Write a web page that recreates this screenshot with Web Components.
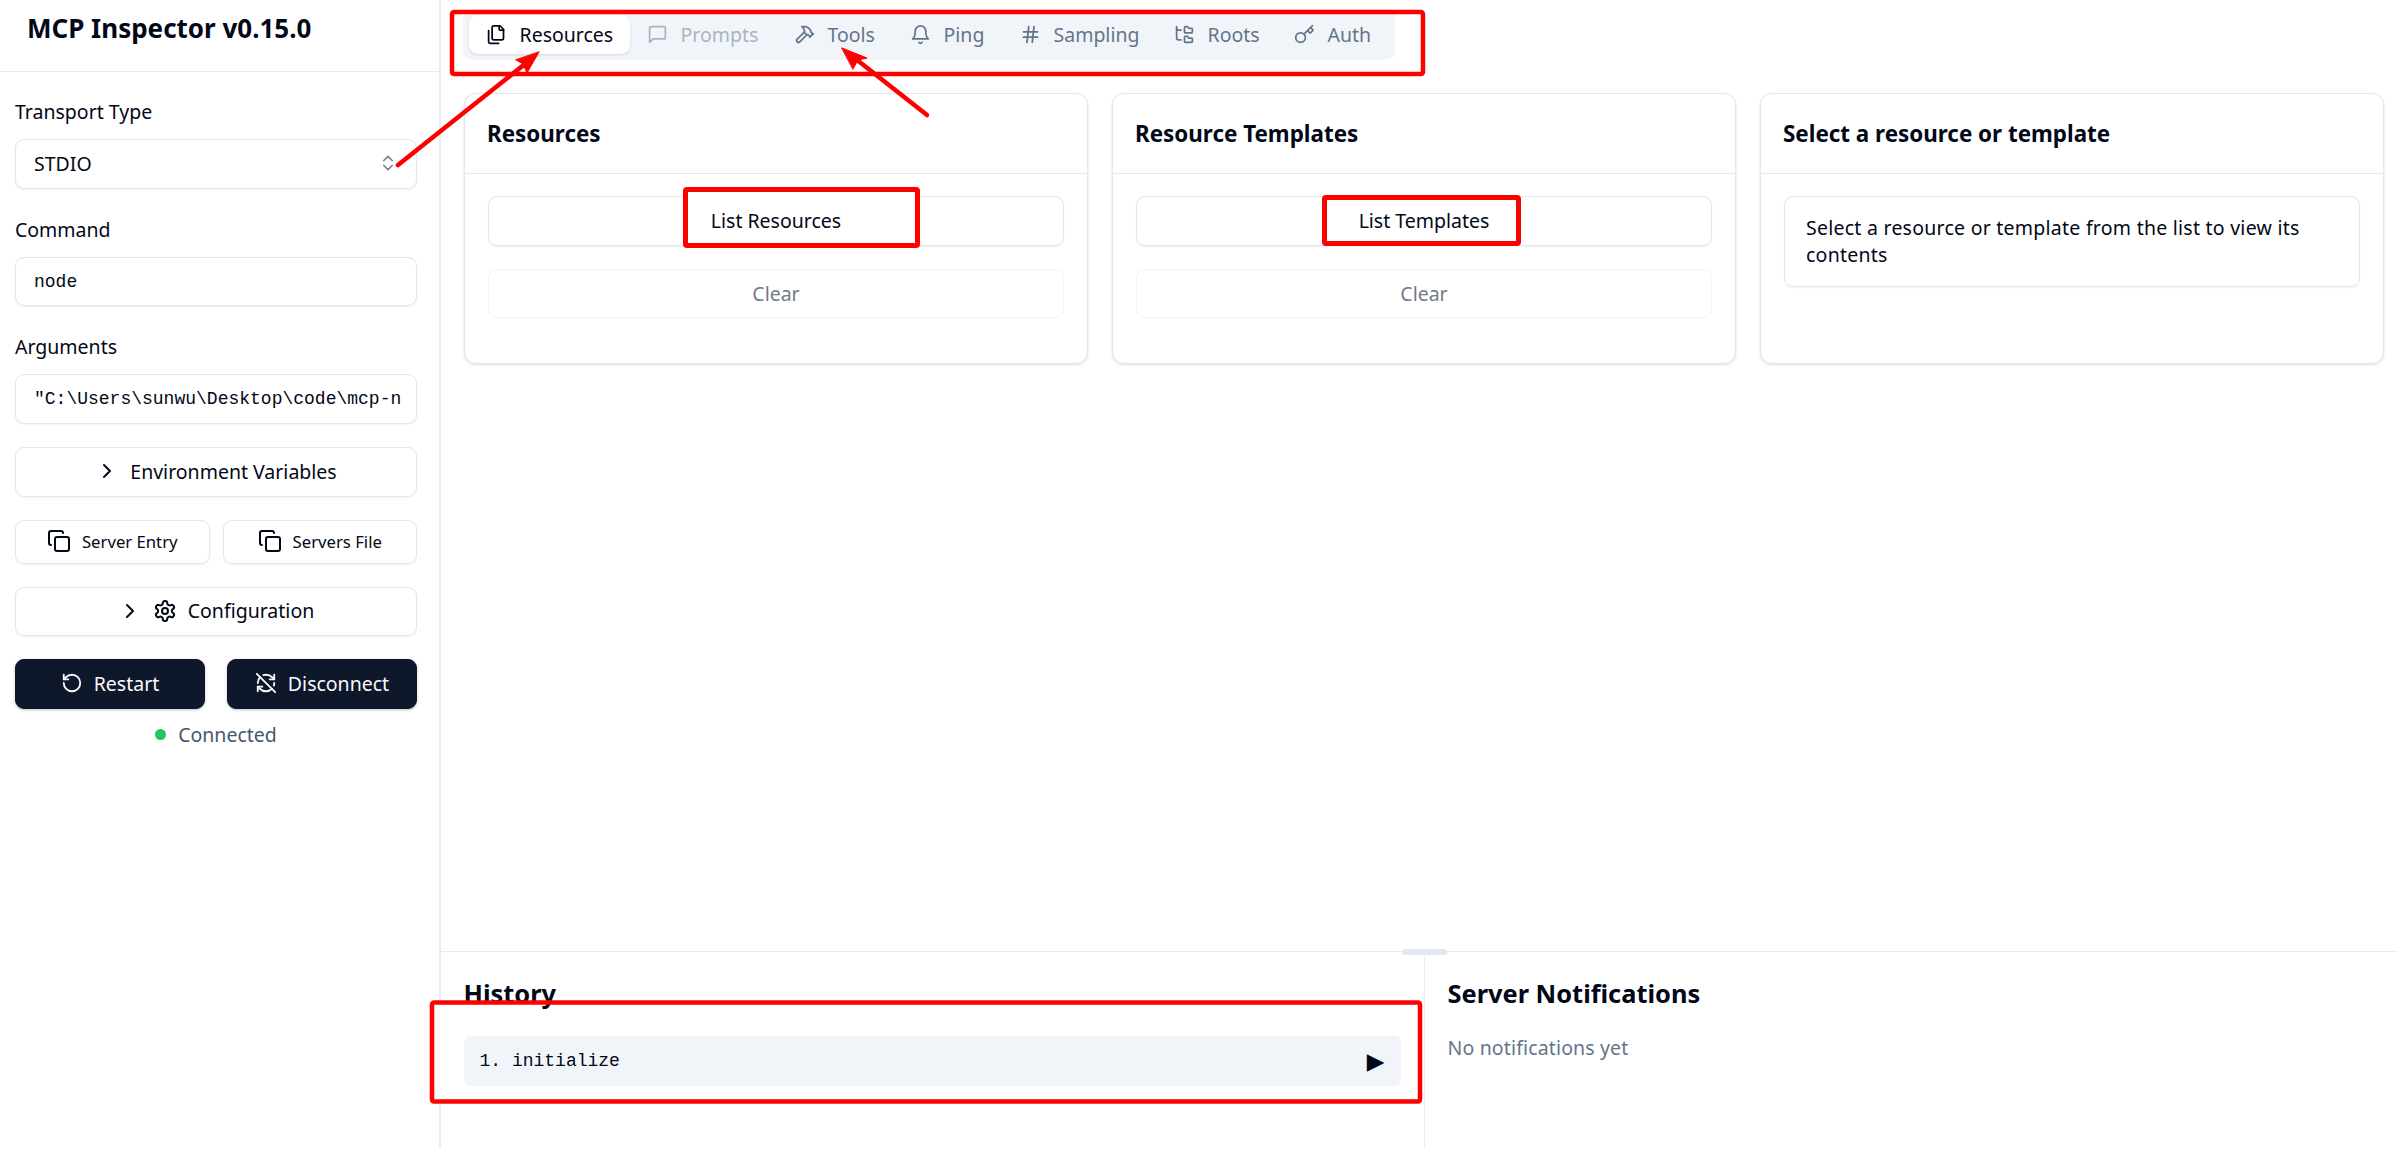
<!DOCTYPE html>
<html>
<head>
<meta charset="utf-8">
<title>MCP Inspector</title>
<style>
    html, body { margin: 0; height: 100%; background: #fff; overflow: hidden; }
    body { font-family: "Noto Sans", "Liberation Sans", sans-serif; font-size: 19.5px; color: #020817; }
</style>
</head>
<body>
<mcp-inspector></mcp-inspector>

<script>
// Stroke icons, same 24x24 grid for all of them
const ICONS = {
    files: '<path d="M20 7h-3a2 2 0 0 1-2-2V2"/><path d="M9 18a2 2 0 0 1-2-2V4a2 2 0 0 1 2-2h7l4 4v10a2 2 0 0 1-2 2Z"/><path d="M3 7.6v12.8A1.6 1.6 0 0 0 4.6 22h9.8"/>',
    message: '<path d="M21 15a2 2 0 0 1-2 2H7l-4 4V5a2 2 0 0 1 2-2h14a2 2 0 0 1 2 2z"/>',
    hammer: '<path d="m15 12-8.373 8.373a1 1 0 1 1-3-3L12 9"/><path d="m18 15 4-4"/><path d="m21.5 11.5-1.914-1.914A2 2 0 0 1 19 8.172V7l-2.26-2.26a6 6 0 0 0-4.202-1.756L9 2.96l.92.82A6.18 6.18 0 0 1 12 8.4V10l2 2h1.172a2 2 0 0 1 1.414.586L18.5 14.5"/>',
    bell: '<path d="M6 8a6 6 0 0 1 12 0c0 7 3 9 3 9H3s3-2 3-9"/><path d="M10.3 21a1.94 1.94 0 0 0 3.4 0"/>',
    hash: '<line x1="4" x2="20" y1="9" y2="9"/><line x1="4" x2="20" y1="15" y2="15"/><line x1="10" x2="8" y1="3" y2="21"/><line x1="16" x2="14" y1="3" y2="21"/>',
    tree: '<path d="M20 10a1 1 0 0 0 1-1V6a1 1 0 0 0-1-1h-2.5a1 1 0 0 1-.8-.4l-.9-1.2A1 1 0 0 0 15 3h-2a1 1 0 0 0-1 1v5a1 1 0 0 0 1 1Z"/><path d="M20 21a1 1 0 0 0 1-1v-3a1 1 0 0 0-1-1h-2.9a1 1 0 0 1-.88-.55l-.42-.85a1 1 0 0 0-.92-.6H13a1 1 0 0 0-1 1v5a1 1 0 0 0 1 1Z"/><path d="M3 5a2 2 0 0 0 2 2h3"/><path d="M3 3v13a2 2 0 0 0 2 2h3"/>',
    key: '<path d="m15.5 7.5 2.3 2.3a1 1 0 0 0 1.4 0l2.1-2.1a1 1 0 0 0 0-1.4L19 4"/><path d="m21 2-9.6 9.6"/><circle cx="7.5" cy="15.5" r="5.5"/>',
    chevron: '<path d="m9 18 6-6-6-6"/>',
    updown: '<path d="m7 15 5 5 5-5"/><path d="m7 9 5-5 5 5"/>',
    copy: '<rect width="14" height="14" x="8" y="8" rx="2" ry="2"/><path d="M4 16c-1.1 0-2-.9-2-2V4c0-1.1.9-2 2-2h10c1.1 0 2 .9 2 2"/>',
    gear: '<path d="M12.22 2h-.44a2 2 0 0 0-2 2v.18a2 2 0 0 1-1 1.73l-.43.25a2 2 0 0 1-2 0l-.15-.08a2 2 0 0 0-2.73.73l-.22.38a2 2 0 0 0 .73 2.73l.15.1a2 2 0 0 1 1 1.72v.51a2 2 0 0 1-1 1.74l-.15.09a2 2 0 0 0-.73 2.73l.22.38a2 2 0 0 0 2.73.73l.15-.08a2 2 0 0 1 2 0l.43.25a2 2 0 0 1 1 1.73V20a2 2 0 0 0 2 2h.44a2 2 0 0 0 2-2v-.18a2 2 0 0 1 1-1.73l.43-.25a2 2 0 0 1 2 0l.15.08a2 2 0 0 0 2.73-.73l.22-.39a2 2 0 0 0-.73-2.73l-.15-.08a2 2 0 0 1-1-1.74v-.5a2 2 0 0 1 1-1.74l.15-.09a2 2 0 0 0 .73-2.73l-.22-.38a2 2 0 0 0-2.73-.73l-.15.08a2 2 0 0 1-2 0l-.43-.25a2 2 0 0 1-1-1.73V4a2 2 0 0 0-2-2z"/><circle cx="12" cy="12" r="3"/>',
    restart: '<path d="M3 12a9 9 0 1 0 9-9 9.75 9.75 0 0 0-6.74 2.74L3 8"/><path d="M3 3v5h5"/>',
    unplug: '<path d="M21 8L18.74 5.74A9.75 9.75 0 0 0 12 3C11 3 10.03 3.16 9.13 3.47"/><path d="M8 16H3v5"/><path d="M3 12C3 9.51 4 7.26 5.64 5.64"/><path d="m3 16 2.26 2.26A9.75 9.75 0 0 0 12 21c2.49 0 4.74-1 6.36-2.64"/><path d="M21 12c0 1-.16 1.97-.47 2.87"/><path d="M21 3v5h-5"/><path d="M22 22 2 2"/>'
};

class UiIcon extends HTMLElement {
    connectedCallback() {
        const size = this.getAttribute('size') || 24;
        this.attachShadow({ mode: 'open' });
        this.shadowRoot.innerHTML = `
            <style>
                :host { display: inline-flex; flex: none; }
                svg { display: block; fill: none; stroke: currentColor; stroke-width: 2; stroke-linecap: round; stroke-linejoin: round; }
            </style>
            <svg width="${size}" height="${size}" viewBox="0 0 24 24">${ICONS[this.getAttribute('name')]}</svg>
        `;
    }
}
customElements.define('ui-icon', UiIcon);

class UiButton extends HTMLElement {
    constructor() {
        super();
        this.attachShadow({ mode: 'open' });
        this.shadowRoot.innerHTML = `
            <style>
                :host {
                    display: flex; align-items: center; justify-content: center; gap: 11px;
                    box-sizing: border-box; height: 50px; padding-bottom: 2px; border-radius: 9px;
                    border: 1px solid #e2e8f0; background: #fff; color: #020817;
                    box-shadow: 0 1px 2px rgba(15, 23, 42, .06);
                    white-space: nowrap; position: relative;
                }
                :host([dark]) { background: #0f172a; border-color: #0f172a; color: #f8fafc; box-shadow: 0 1px 3px rgba(15, 23, 42, .25); }
                :host([disabled]) { color: #717a8b; border-color: #f0f3f7; box-shadow: none; padding-bottom: 0; }
                :host([small]) { font-size: 16.7px; }
            </style>
            <slot></slot>
        `;
    }
}
customElements.define('ui-button', UiButton);

// Button whose label is marked by a hand drawn white-filled red frame
class MarkedButton extends HTMLElement {
    constructor() {
        super();
        this.attachShadow({ mode: 'open' });
        this.shadowRoot.innerHTML = `
            <style>
                :host { display: block; }
                .mark {
                    position: absolute; box-sizing: border-box; background: #fff;
                    border: 5px solid #f00; border-radius: 4px;
                }
                span { position: relative; }
            </style>
            <ui-button><div class="mark"></div><span><slot></slot></span></ui-button>
        `;
    }
    connectedCallback() {
        this.shadowRoot.querySelector('.mark').style.cssText = this.getAttribute('mark');
    }
}
customElements.define('marked-button', MarkedButton);

class FieldBox extends HTMLElement {
    constructor() {
        super();
        this.attachShadow({ mode: 'open' });
        this.shadowRoot.innerHTML = `
            <style>
                :host {
                    display: flex; align-items: center; justify-content: space-between;
                    box-sizing: border-box; height: 50px; padding: 0 18px 2px; overflow: hidden;
                    border: 1px solid #e2e8f0; border-radius: 9px; background: #fff;
                    box-shadow: 0 1px 2px rgba(15, 23, 42, .06); white-space: nowrap;
                }
                :host([mono]) { font-family: "Liberation Mono", monospace; font-size: 18px; padding-bottom: 0; }
            </style>
            <slot></slot>
        `;
    }
}
customElements.define('field-box', FieldBox);

class TabItem extends HTMLElement {
    connectedCallback() {
        this.attachShadow({ mode: 'open' });
        this.shadowRoot.innerHTML = `
            <style>
                :host {
                    display: flex; align-items: center; gap: 13px; box-sizing: border-box; flex: none;
                    height: 39px; padding-left: 16.5px; border-radius: 9px; color: #64748b;
                    white-space: nowrap;
                }
                :host([active]) { background: #fff; color: #020817; box-shadow: 0 1px 3px rgba(15, 23, 42, .12); }
                :host([disabled]) { opacity: .5; }
            </style>
            <ui-icon size="21" name="${this.getAttribute('icon')}"></ui-icon>
            <slot></slot>
        `;
    }
}
customElements.define('tab-item', TabItem);

class TabBar extends HTMLElement {
    constructor() {
        super();
        this.attachShadow({ mode: 'open' });
        this.shadowRoot.innerHTML = `
            <style>
                :host {
                    display: flex; align-items: flex-start; box-sizing: border-box; width: 932px; height: 51px;
                    margin: 9px 0 0 22px; padding: 6px; background: #f1f5f9; border-radius: 9px;
                }
            </style>
            <slot></slot>
        `;
    }
}
customElements.define('tab-bar', TabBar);

class ResCard extends HTMLElement {
    constructor() {
        super();
        this.attachShadow({ mode: 'open' });
        this.shadowRoot.innerHTML = `
            <style>
                :host {
                    display: block; box-sizing: border-box; height: 271px;
                    border: 1px solid #e2e8f0; border-radius: 12px; background: #fff;
                    box-shadow: 0 1px 3px rgba(15, 23, 42, .12);
                }
                header {
                    box-sizing: border-box; height: 80px; padding: 0 22px; display: flex; align-items: center;
                    border-bottom: 1px solid #e2e8f0; font-size: 22.4px; font-weight: 700;
                }
                section { display: flex; flex-direction: column; gap: 23px; padding: 22px 23px; }
            </style>
            <header></header>
            <section><slot></slot></section>
        `;
    }
    connectedCallback() {
        this.shadowRoot.querySelector('header').textContent = this.getAttribute('title');
        this.removeAttribute('title');
    }
}
customElements.define('res-card', ResCard);

class InspectorSidebar extends HTMLElement {
    constructor() {
        super();
        this.attachShadow({ mode: 'open' });
        this.shadowRoot.innerHTML = `
            <style>
                :host {
                    display: block; flex: none; box-sizing: border-box; width: 441px; height: 100%;
                    border-right: 2px solid #e7ebf2;
                }
                h1 {
                    box-sizing: border-box; height: 72px; margin: 0; padding: 8px 0 0 27px;
                    border-bottom: 1px solid #e7ebf2; font-size: 26px; line-height: 40px; font-weight: 700;
                }
                .body { display: flex; flex-direction: column; padding: 26px 22px 0 15px; }
                label { display: block; height: 28px; line-height: 28px; margin-bottom: 13px; }
                field-box + label { margin-top: 27px; }
                .row { display: flex; gap: 13px; }
                .row > * { flex: 1; }
                .actions { gap: 22px; }
                .env { margin-top: 23px; }
                .small { height: 44px; }
                .status {
                    display: flex; align-items: center; justify-content: center; gap: 12px;
                    height: 28px; margin-top: 11px; color: #475569;
                }
                .dot { width: 11px; height: 11px; border-radius: 50%; background: #22c55e; }
                .updown { opacity: .5; }
            </style>
            <h1>MCP Inspector v0.15.0</h1>
            <div class="body">
                <label>Transport Type</label>
                <field-box>STDIO<ui-icon class="updown" name="updown" size="20"></ui-icon></field-box>
                <label>Command</label>
                <field-box mono style="height:49px">node</field-box>
                <label>Arguments</label>
                <field-box mono>"C:\\Users\\sunwu\\Desktop\\code\\mcp-n</field-box>
                <ui-button class="env"><ui-icon name="chevron"></ui-icon>Environment Variables</ui-button>
                <div class="row env">
                    <ui-button class="small" small><ui-icon name="copy"></ui-icon>Server Entry</ui-button>
                    <ui-button class="small" small><ui-icon name="copy"></ui-icon>Servers File</ui-button>
                </div>
                <ui-button class="env" style="height:49px"><ui-icon name="chevron"></ui-icon><ui-icon name="gear"></ui-icon>Configuration</ui-button>
                <div class="row actions env">
                    <ui-button dark><ui-icon name="restart" size="22"></ui-icon>Restart</ui-button>
                    <ui-button dark><ui-icon name="unplug" size="22"></ui-icon>Disconnect</ui-button>
                </div>
                <div class="status"><span class="dot"></span>Connected</div>
            </div>
        `;
    }
}
customElements.define('inspector-sidebar', InspectorSidebar);

class BottomPanel extends HTMLElement {
    constructor() {
        super();
        this.attachShadow({ mode: 'open' });
        this.shadowRoot.innerHTML = `
            <style>
                :host {
                    display: grid; grid-template-columns: 984px 1fr; flex: none; box-sizing: border-box;
                    height: 198px; border-top: 1px solid #e7ebf2; position: relative;
                }
                .handle {
                    position: absolute; left: 961px; top: -3px; width: 45px; height: 6px;
                    border-radius: 3px; background: #e2e8f0;
                }
                section { padding: 24px 22.5px 0; }
                .history { border-right: 1px solid #e7ebf2; }
                h2 { margin: 0; height: 34px; line-height: 34px; font-size: 25.4px; font-weight: 700; }
                .item {
                    display: flex; align-items: center; justify-content: space-between; box-sizing: border-box;
                    width: 937px; height: 50px; margin-top: 26px; padding: 0 16px; border-radius: 6px; background: #f1f5f9;
                    font-family: "Liberation Mono", monospace; font-size: 18px;
                }
                .play { font-family: "DejaVu Sans", sans-serif; font-size: 23px; line-height: 1; }
                .empty { margin-top: 24px; line-height: 28px; color: #64748b; letter-spacing: .15px; }
            </style>
            <div class="handle"></div>
            <section class="history">
                <h2>History</h2>
                <div class="item"><span>1. initialize</span><span class="play">▶</span></div>
            </section>
            <section>
                <h2>Server Notifications</h2>
                <div class="empty">No notifications yet</div>
            </section>
        `;
    }
}
customElements.define('bottom-panel', BottomPanel);

// The red frames and arrows drawn on the screenshot afterwards
class RedMarks extends HTMLElement {
    constructor() {
        super();
        this.attachShadow({ mode: 'open' });
        this.shadowRoot.innerHTML = `
            <style>
                :host { position: absolute; left: 0; top: 0; width: 2398px; height: 1149px; pointer-events: none; }
                svg { display: block; }
            </style>
            <svg width="2398" height="1149" fill="none" stroke="#f00" stroke-width="4.5" stroke-linecap="round" stroke-linejoin="round">
                <rect x="452" y="12" width="971" height="62" rx="2"/>
                <rect x="432" y="1002.5" width="988" height="99" rx="2"/>
                <rect x="439" y="1006" width="3" height="93" fill="#fff" stroke="none"/>
                <line x1="398" y1="165" x2="530" y2="60"/>
                <polygon points="539,52 527,73 523,64 516,60" fill="#f00" stroke-width="1"/>
                <line x1="927" y1="115" x2="852" y2="56"/>
                <polygon points="842,48 867,58 858,60 853,69" fill="#f00" stroke-width="1"/>
            </svg>
        `;
    }
}
customElements.define('red-marks', RedMarks);

class McpInspector extends HTMLElement {
    constructor() {
        super();
        this.attachShadow({ mode: 'open' });
        this.shadowRoot.innerHTML = `
            <style>
                :host { display: flex; width: 2398px; height: 1149px; position: relative; overflow: hidden; }
                main { flex: 1; display: flex; flex-direction: column; min-width: 0; }
                .top { flex: 1; }
                .cards { display: grid; grid-template-columns: repeat(3, 624px); gap: 24px; margin: 33px 0 0 23px; }
                .hint { height: 91px; padding: 0 21px 2px; white-space: normal; line-height: 27px; letter-spacing: .25px; }
            </style>
            <inspector-sidebar></inspector-sidebar>
            <main>
                <div class="top">
                    <tab-bar>
                        <tab-item active icon="files" style="width:161px">Resources</tab-item>
                        <tab-item disabled icon="message" style="width:147px">Prompts</tab-item>
                        <tab-item icon="hammer" style="width:116px">Tools</tab-item>
                        <tab-item icon="bell" style="width:110px">Ping</tab-item>
                        <tab-item icon="hash" style="width:154px">Sampling</tab-item>
                        <tab-item icon="tree" style="width:120px">Roots</tab-item>
                        <tab-item icon="key" style="width:112px">Auth</tab-item>
                    </tab-bar>
                    <div class="cards">
                        <res-card title="Resources">
                            <marked-button mark="left:194px;right:143px;top:-10px;bottom:-3px;">List Resources</marked-button>
                            <ui-button disabled style="height:49px">Clear</ui-button>
                        </res-card>
                        <res-card title="Resource Templates">
                            <marked-button mark="left:185px;right:190px;top:-2px;bottom:-1px;">List Templates</marked-button>
                            <ui-button disabled style="height:49px">Clear</ui-button>
                        </res-card>
                        <res-card title="Select a resource or template">
                            <field-box class="hint">Select a resource or template from the list to view its contents</field-box>
                        </res-card>
                    </div>
                </div>
                <bottom-panel></bottom-panel>
            </main>
            <red-marks></red-marks>
        `;
    }
}
customElements.define('mcp-inspector', McpInspector);
</script>
</body>
</html>
